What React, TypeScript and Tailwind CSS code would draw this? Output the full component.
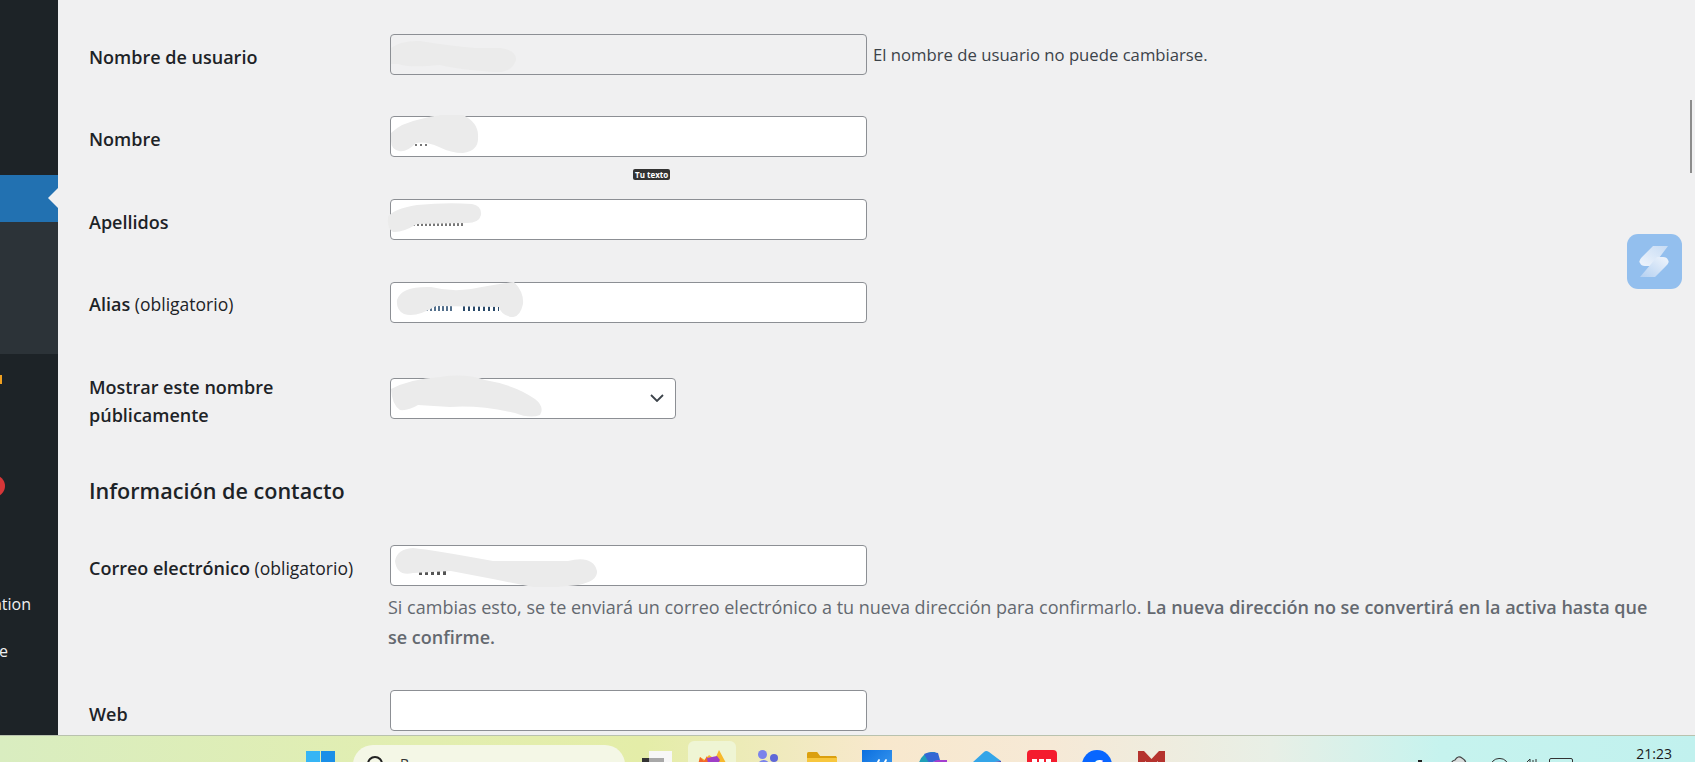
import React from "react";

const font = { fontFamily: '"Open Sans", "Noto Sans", sans-serif' };

function Blob({ d, w, h, className }: { d: string; w: number; h: number; className: string }) {
  return (
    <svg width={w} height={h} viewBox={`0 0 ${w} ${h}`} className={`absolute ${className}`}>
      <path d={d} fill="#ebebeb" />
    </svg>
  );
}

function Field({
  width = "w-[477px]",
  disabled,
  children,
}: {
  width?: string;
  disabled?: boolean;
  children?: React.ReactNode;
}) {
  return (
    <div
      className={`relative h-[41px] shrink-0 ${width} rounded-[4px] border border-[#8c8f94] ${
        disabled ? "bg-[#f0f0f1]" : "bg-white"
      }`}
    >
      {children}
    </div>
  );
}

function Row({ label, note, top, labelTop, children }: { label: React.ReactNode; note?: string; top: string; labelTop: string; children: React.ReactNode }) {
  return (
    <div className={`flex items-start ${top}`}>
      <div className={`w-[301px] shrink-0 text-[18px] leading-[28px] font-semibold text-[#1d2327] ${labelTop}`}>{label}</div>
      {children}
      {note && <span className="ml-[6px] mt-[7px] text-[16.7px] leading-[28px] text-[#3c434a]">{note}</span>}
    </div>
  );
}

function Req({ label }: { label: string }) {
  return (
    <>
      {label} <span className="text-[17.5px] font-medium">(obligatorio)</span>
    </>
  );
}

function Sidebar() {
  return (
    <aside className="relative w-[58px] shrink-0 bg-[#1d2327] text-[16px] text-[#f0f0f1]">
      <div className="h-[175px]" />
      <div className="relative h-[47px] bg-[#2271b1]">
        <svg width="10" height="20" viewBox="0 0 10 20" className="absolute right-0 top-[13px]">
          <path d="M10 0 L0 10 L10 20 Z" fill="#f0f0f1" />
        </svg>
      </div>
      <div className="h-[132px] bg-[#2c3338]" />
      <div className="h-[30px] pt-[21px]">
        <div className="h-[9px] w-[2px] bg-[#f0a020]" />
      </div>
      <div className="mt-[91px] h-[22px] w-[5px] overflow-hidden">
        <div className="ml-[-17px] h-[22px] w-[22px] rounded-full bg-[#d63638]" />
      </div>
      <div className="mt-[95px] flex w-[31px] justify-end overflow-hidden whitespace-nowrap leading-[24px]">Animation</div>
      <div className="mt-[23px] flex w-[8px] justify-end overflow-hidden whitespace-nowrap leading-[24px]">e</div>
    </aside>
  );
}

function Taskbar() {
  return (
    <footer className="relative h-[27px] shrink-0 overflow-hidden border-t border-[#b9c2ae] bg-[linear-gradient(90deg,#d9edc0_0%,#e2eeb0_25%,#e4eda8_38%,#f8e8cd_52%,#f6e9d6_62%,#e8efe6_75%,#c6f3ee_85%,#c1f1ee_100%)]">
      <div className="flex h-full items-start pl-[306px]">
        <div className="mt-[15px] grid shrink-0 grid-cols-2 gap-[1px]">
          <div className="h-[14px] w-[14px] bg-[#36b5f5]" />
          <div className="h-[14px] w-[14px] bg-[#1a8fe8]" />
        </div>
        <div className="ml-[18px] mt-[9px] flex h-[40px] w-[272px] shrink-0 rounded-t-[20px] bg-[#f4f7e6] pl-[14px] pt-[11px]">
          <div className="h-[16px] w-[16px] rounded-full border-[2px] border-[#222]" />
          <span className="ml-[17px] mt-[-2px] text-[14px] leading-[20px] text-[#333]">B</span>
        </div>
        <div className="ml-[17px] mt-[15px] flex h-[20px] w-[30px] shrink-0 items-start">
          <div className="mt-[7px] h-[13px] w-[7px] bg-[#333]" />
          <div className="relative h-[20px] w-[23px] bg-[#f7f7f7]">
            <div className="absolute left-0 top-[7px] h-[13px] w-[15px] bg-[#a8a8a8]" />
          </div>
        </div>
        <div className="ml-[16px] mt-[5px] flex h-[30px] w-[48px] shrink-0 justify-center rounded-[6px] bg-[#eff5d4] pt-[4px]">
          <svg width="30" height="24" viewBox="0 0 30 24">
            <path d="M0 24 L3 12 L8 15 L12 10 L18 14 L22 5 L29 18 L29 24 Z" fill="#f7b92c" />
            <path d="M0 24 L3 12 L7 16 L10 11 L14 24 Z" fill="#f2682a" />
            <path d="M10 13 L20 11 L23 15 L18 24 L12 24 Z" fill="#9f3fc7" />
          </svg>
        </div>
        <svg width="20" height="24" viewBox="0 0 20 24" className="ml-[22px] mt-[14px] shrink-0">
          <circle cx="4.5" cy="4.5" r="4.5" fill="#7b83eb" />
          <circle cx="16" cy="8" r="4" fill="#5f68d8" />
          <path d="M0 24 L-1 14 Q4 8 9 11 L15 16 L15 24 Z" fill="#7b83eb" />
        </svg>
        <svg width="30" height="22" viewBox="0 0 30 22" className="ml-[29px] mt-[16px] shrink-0">
          <path d="M0 2 Q0 0 2 0 L10 0 L13 4 L28 4 L30 6 L30 22 L0 22 Z" fill="#f8c73d" />
          <path d="M0 2 Q0 0 2 0 L10 0 L13 4 L29 4 L30 6 L0 6 Z" fill="#dba00f" />
        </svg>
        <div className="ml-[25px] mt-[14px] h-[24px] w-[30px] shrink-0 bg-[linear-gradient(135deg,#0b6fdf,#3c9af0)] pl-[9px] pt-[8px]">
          <svg width="16" height="14" viewBox="0 0 16 14">
            <path d="M0 14 L7 2 Q8 0 9 2 L4 14 Z M7 14 L14 2 Q15 0 16 2 L11 14 Z" fill="#fff" />
          </svg>
        </div>
        <svg width="29" height="22" viewBox="0 0 29 22" className="ml-[26px] mt-[16px] shrink-0">
          <path d="M0 14 Q3 1 13 0 L18 0 Q11 4 10 14 L9 22 L0 22 Z" fill="#1fa0b8" />
          <path d="M6 2 Q12 -1 20 1 L22 8 L11 11 Z" fill="#3568d4" />
          <path d="M15 13 Q15 8 20 8 L29 8 L29 15 L18 18 Z" fill="#a33ed0" />
          <path d="M15 19 L29 14 L29 22 L13 22 Z" fill="#d56fd0" />
        </svg>
        <svg width="28" height="24" viewBox="0 0 28 24" className="ml-[26px] mt-[15px] shrink-0">
          <path d="M0 11 L11 1 Q13 -1 16 1 L28 10 L15 12 L9 18 Z" fill="#34a5e8" />
          <path d="M15 12 L28 10 L28 16 L18 24 L9 18 Z" fill="#3538b8" />
          <path d="M0 11 L9 18 L6 24 L0 24 Z" fill="#1f6fd0" />
        </svg>
        <div className="ml-[26px] mt-[14px] flex h-[24px] w-[30px] shrink-0 justify-center rounded-t-[4px] bg-[#f41c2e] pt-[9px]">
          <div className="h-[6px] w-[20px] bg-[repeating-linear-gradient(90deg,#ffffff_0_5px,#f41c2e_5px_7px)]" />
        </div>
        <div className="ml-[25px] mt-[14px] flex h-[30px] w-[30px] shrink-0 justify-center rounded-full bg-[#0866ff] pt-[6px]">
          <span className="text-[24px] font-bold leading-[26px] text-white">f</span>
        </div>
        <svg width="27" height="22" viewBox="0 0 27 22" className="ml-[26px] mt-[15px] shrink-0">
          <path d="M0 0 L6 0 L13.5 8 L21 0 L27 0 L27 22 L20 22 L20 10 L13.5 16 L7 10 L7 22 L0 22 Z" fill="#b5332e" />
        </svg>
      </div>
      <div className="absolute right-[23px] top-[10px] text-[14px] leading-[16px] text-[#1a1a1a]">21:23</div>
      <div className="absolute left-[1418px] top-[24px] h-[2px] w-[4px] bg-[#222]" />
      <svg width="18" height="12" viewBox="0 0 18 12" className="absolute left-[1450px] top-[19px]">
        <path d="M2 12 Q0 6 5 5 Q8 0 12 3 Q17 6 16 12" fill="#d9dede" stroke="#444" strokeWidth="1.2" />
      </svg>
      <div className="absolute left-[1490px] top-[22px] h-[18px] w-[19px] rounded-full border border-[#333]" />
      <svg width="18" height="12" viewBox="0 0 18 12" className="absolute left-[1520px] top-[20px]">
        <path d="M1 8 L5 8 L10 3 L10 12 M13 4 L13 9 M16 3 L16 11" fill="none" stroke="#333" strokeWidth="1" />
      </svg>
      <div className="absolute left-[1549px] top-[22px] h-[12px] w-[24px] rounded-[2px] border border-[#333]" />
    </footer>
  );
}

export default function App() {
  return (
    <div className="flex h-[762px] w-[1695px] flex-col overflow-hidden bg-[#f0f0f1]" style={font}>
      <div className="relative flex min-h-0 flex-1">
        <Sidebar />
        <main className="relative min-w-0 flex-1 pl-[31px]">
          <Row top="mt-[34px]" labelTop="mt-[9px]" label="Nombre de usuario" note="El nombre de usuario no puede cambiarse.">
            <Field disabled>
              <div className="absolute left-[100px] top-[13px] h-[2px] w-[1px] bg-[#555]" />
              <Blob className="left-[-1px] top-[5px]" w={128} h={34} d="M1 8 Q12 0 30 1 Q60 6 85 8 L110 8 Q127 10 126 20 Q122 33 105 32 Q70 30 50 25 Q20 28 8 24 L1 24 Z" />
            </Field>
          </Row>
          <Row top="mt-[41px]" labelTop="mt-[9px]" label="Nombre">
            <Field>
              <div className="absolute left-[24px] top-[27px] h-[2px] w-[14px] bg-[repeating-linear-gradient(90deg,#777_0_2px,transparent_2px_5px)]" />
              <Blob className="left-0 top-[-2px]" w={89} h={38} d="M0 18 Q10 8 30 4 Q50 -2 72 0 Q88 8 87 22 Q88 36 72 38 Q60 38 48 32 Q35 26 25 28 Q15 38 8 36 Q0 34 0 26Z" />
            </Field>
          </Row>
          <Row top="mt-[42px]" labelTop="mt-[9px]" label="Apellidos">
            <Field>
              <div className="absolute left-[22px] top-[20px] h-[6px] w-[52px] bg-[repeating-linear-gradient(90deg,#777_0_2px,transparent_2px_4px)]" />
              <Blob className="left-[-4px] top-[3px]" w={96} h={30} d="M1 14 Q6 6 30 2 Q60 -1 85 1 Q95 3 94 12 Q92 20 80 20 L30 21 Q15 30 6 29 Q0 26 1 14Z" />
            </Field>
          </Row>
          <Row top="mt-[42px]" labelTop="mt-[8px]" label={<Req label="Alias" />}>
            <Field>
              <div className="absolute left-[31px] top-[22px] h-[6px] w-[32px] bg-[repeating-linear-gradient(90deg,#54708c_0_2px,transparent_2px_4px)]" />
              <div className="absolute left-[72px] top-[22px] h-[6px] w-[36px] bg-[repeating-linear-gradient(90deg,#2a4a6a_0_2px,transparent_2px_5px)]" />
              <Blob className="left-[5px] top-[-1px]" w={128} h={35} d="M1 18 Q5 4 35 5 Q55 10 75 7 Q100 2 118 0 Q128 10 127 22 Q124 36 115 35 Q105 33 103 25 L40 24 Q20 36 8 32 Q0 28 1 18Z" />
            </Field>
          </Row>
          <Row top="mt-[55px]" labelTop="mt-[-5px]" label={<>Mostrar este nombre<br />públicamente</>}>
            <Field width="w-[286px]">
              <Blob className="left-[-1px] top-[-4px]" w={154} h={44} d="M1 14 Q20 4 50 2 Q75 -2 95 5 Q125 10 145 24 Q155 32 150 40 Q140 44 125 38 Q90 30 60 32 L28 30 Q18 36 10 35 Q2 30 1 14Z" />
              <svg width="14" height="8" viewBox="0 0 14 8" className="absolute right-[11px] top-[15px]">
                <path d="M1 1 L7 7 L13 1" fill="none" stroke="#3c434a" strokeWidth="1.8" />
              </svg>
            </Field>
          </Row>
          <h2 className="mt-[47px] text-[21.6px] leading-[30px] font-semibold text-[#1d2327]">Información de contacto</h2>
          <Row top="mt-[39px]" labelTop="mt-[9px]" label={<Req label="Correo electrónico" />}>
            <Field>
              <div className="absolute left-[28px] top-[24px] h-[5px] w-[29px] bg-[repeating-linear-gradient(90deg,#555_0_3px,transparent_3px_6px)]" />
              <Blob className="left-[2px] top-[1px]" w={205} h={42} d="M2 14 Q4 2 20 1 Q40 3 100 14 L175 14 Q200 8 204 24 Q205 34 185 38 L165 40 L140 40 L100 32 L58 24 L20 26 Q4 30 2 14Z" />
            </Field>
          </Row>
          <p className="ml-[299px] mt-[6px] w-[1260px] text-[18px] leading-[30px] text-[#646970]">
            Si cambias esto, se te enviará un correo electrónico a tu nueva dirección para confirmarlo.{" "}
            <strong className="font-semibold">La nueva dirección no se convertirá en la activa hasta que se confirme.</strong>
          </p>
          <Row top="mt-[38px]" labelTop="mt-[10px]" label="Web">
            <Field />
          </Row>
          <div className="absolute left-[575px] top-[169px] rounded-[2px] bg-[#333] px-[2px] text-[8px] font-bold leading-[11px] text-white">Tu texto</div>
        </main>
        <div className="absolute left-[1690px] top-[100px] h-[73px] w-[2px] bg-[#8c8c8c]" />
        <div className="absolute left-[1627px] top-[234px] h-[55px] w-[55px] rounded-[11px] bg-[#93bfee]">
          <svg width="55" height="55" viewBox="0 0 55 55">
            <defs>
              <linearGradient id="topS" x1="0" y1="1" x2="1" y2="0">
                <stop offset="0" stopColor="#f0f5fc" />
                <stop offset="1" stopColor="#c6dbf4" />
              </linearGradient>
              <linearGradient id="botS" x1="1" y1="0" x2="0" y2="1">
                <stop offset="0" stopColor="#f0f5fc" />
                <stop offset="1" stopColor="#b4d0f1" />
              </linearGradient>
            </defs>
            <path d="M41 12 L26 12 L15 23 Q11 27 13 29 Q14 32 18 32 L26 32 Z" fill="url(#topS)" />
            <path d="M13 43 L28 43 L39 32 Q43 28 41 26 Q40 23 36 23 L30 23 Z" fill="url(#botS)" />
          </svg>
        </div>
      </div>
      <Taskbar />
    </div>
  );
}
